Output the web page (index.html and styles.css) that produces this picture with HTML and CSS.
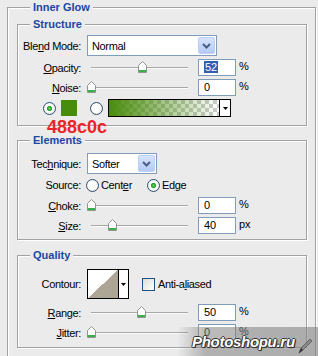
FILE: index.html
```html
<!DOCTYPE html>
<html>
<head>
<meta charset="utf-8">
<link rel="stylesheet" href="styles.css">
</head>
<body>
<div class="group outer">
  <div class="legend">Inner Glow</div>

  <div class="group sub structure">
    <div class="legend">Structure</div>
    <div class="row r-select">
      <span class="lbl">Ble<u>n</u>d Mode:</span>
      <div class="select blend"><span class="stext">Normal</span><span class="btn"><svg width="15" height="17" viewBox="0 0 15 17"><path d="M4 7 L7.5 10.5 L11 7" fill="none" stroke="#4a5f86" stroke-width="2"/></svg></span></div>
    </div>
    <div class="row">
      <span class="lbl"><u>O</u>pacity:</span>
      <div class="slider"><span class="track"></span><svg class="thumb" style="left:51px" width="9" height="12" viewBox="0 0 9 12"><path d="M0.5 11.5V4.5L4.5 0.5L8.5 4.5V11.5Z" fill="#fff" stroke="#8d978d"/><rect x="1" y="9" width="7" height="2" fill="#3bb04a"/></svg></div>
      <div class="num"><span class="sel">52</span></div>
      <span class="unit">%</span>
    </div>
    <div class="row">
      <span class="lbl"><u>N</u>oise:</span>
      <div class="slider"><span class="track"></span><svg class="thumb" style="left:0px" width="9" height="12" viewBox="0 0 9 12"><path d="M0.5 11.5V4.5L4.5 0.5L8.5 4.5V11.5Z" fill="#fff" stroke="#8d978d"/><rect x="1" y="9" width="7" height="2" fill="#3bb04a"/></svg></div>
      <div class="num">0</div>
      <span class="unit">%</span>
    </div>
    <div class="row r-color">
      <span class="radio on first"></span>
      <span class="swatch"></span>
      <span class="radio second"></span>
      <div class="grad"><span class="gbar"></span><span class="garrow"><svg width="5" height="3" viewBox="0 0 5 3"><path d="M0 0H5L2.5 3Z" fill="#000"/></svg></span></div>
    </div>
    <div class="hex">488c0c</div>
  </div>

  <div class="group sub elements">
    <div class="legend">Elements</div>
    <div class="row r-select tech">
      <span class="lbl">Tec<u>h</u>nique:</span>
      <div class="select softer"><span class="stext">Softer</span><span class="btn"><svg width="15" height="17" viewBox="0 0 15 17"><path d="M4 7 L7.5 10.5 L11 7" fill="none" stroke="#4a5f86" stroke-width="2"/></svg></span></div>
    </div>
    <div class="row src">
      <span class="lbl srclbl">Source:</span>
      <label class="opt"><span class="radio"></span><span class="otext">Cent<u>e</u>r</span></label>
      <label class="opt"><span class="radio on"></span><span class="otext">Ed<u>g</u>e</span></label>
    </div>
    <div class="row">
      <span class="lbl"><u>C</u>hoke:</span>
      <div class="slider"><span class="track"></span><svg class="thumb" style="left:0px" width="9" height="12" viewBox="0 0 9 12"><path d="M0.5 11.5V4.5L4.5 0.5L8.5 4.5V11.5Z" fill="#fff" stroke="#8d978d"/><rect x="1" y="9" width="7" height="2" fill="#3bb04a"/></svg></div>
      <div class="num">0</div>
      <span class="unit">%</span>
    </div>
    <div class="row">
      <span class="lbl"><u>S</u>ize:</span>
      <div class="slider"><span class="track"></span><svg class="thumb" style="left:21px" width="9" height="12" viewBox="0 0 9 12"><path d="M0.5 11.5V4.5L4.5 0.5L8.5 4.5V11.5Z" fill="#fff" stroke="#8d978d"/><rect x="1" y="9" width="7" height="2" fill="#3bb04a"/></svg></div>
      <div class="num">40</div>
      <span class="unit">px</span>
    </div>
  </div>

  <div class="group sub quality">
    <div class="legend">Quality</div>
    <div class="row r-contour">
      <span class="lbl">Contour:</span>
      <div class="contour"><span class="cprev"></span><span class="carrow"><svg width="5" height="3" viewBox="0 0 5 3"><path d="M0 0H5L2.5 3Z" fill="#000"/></svg></span></div>
      <span class="check"></span>
      <span class="ctext">Anti-a<u>l</u>iased</span>
    </div>
    <div class="row range">
      <span class="lbl"><u>R</u>ange:</span>
      <div class="slider"><span class="track"></span><svg class="thumb" style="left:50px" width="9" height="12" viewBox="0 0 9 12"><path d="M0.5 11.5V4.5L4.5 0.5L8.5 4.5V11.5Z" fill="#fff" stroke="#8d978d"/><rect x="1" y="9" width="7" height="2" fill="#3bb04a"/></svg></div>
      <div class="num">50</div>
      <span class="unit">%</span>
    </div>
    <div class="row">
      <span class="lbl"><u>J</u>itter:</span>
      <div class="slider"><span class="track"></span><svg class="thumb" style="left:0px" width="9" height="12" viewBox="0 0 9 12"><path d="M0.5 11.5V4.5L4.5 0.5L8.5 4.5V11.5Z" fill="#fff" stroke="#8d978d"/><rect x="1" y="9" width="7" height="2" fill="#3bb04a"/></svg></div>
      <div class="num">0</div>
      <span class="unit">%</span>
    </div>
  </div>
</div>

<div class="wm"><span class="wmtext">Photoshopu.ru</span><svg class="pen" width="16" height="18" viewBox="0 0 16 18"><path d="M2 16 L4 11 L13 2 L15 4 L6 13 Z" fill="#8a8a8a" stroke="#555" stroke-width="0.8"/><path d="M2 16 L4 11 L6 13 Z" fill="#333"/></svg></div>
</body>
</html>
```

FILE: styles.css
```css
html, body {
  margin: 0;
  padding: 0;
  overflow: hidden;
  background: #ebebeb;
}
body {
  font-family: "Liberation Sans", Arial, sans-serif;
  font-size: 11px;
  letter-spacing: -0.35px;
  color: #000;
  width: 318px;
  height: 356px;
  position: relative;
}
u { text-decoration: underline; text-underline-offset: 1px; }

.group {
  border: 1px solid #a2a2a2;
  box-shadow: inset 1px 1px 0 #fff, 1px 1px 0 #fff;
  box-sizing: border-box;
}
.outer {
  margin: 7px 0 0 7px;
  width: 309px;
  padding: 0 8px 14px 9px;
}
.legend {
  display: block;
  width: fit-content;
  height: 14px;
  line-height: 14px;
  margin: -8px 0 0 12px;
  padding: 0 3px;
  background: #ebebeb;
  color: #1c46a4;
  font-weight: bold;
  font-size: 11px;
  letter-spacing: 0;
  position: relative;
}
.outer > .legend { margin-left: 13px; }

.sub { width: 290px; position: relative; }
.structure { margin-top: 10px; padding-bottom: 7px; }
.elements { margin-top: 14px; padding-bottom: 3px; }
.quality { margin-top: 15px; padding-bottom: 4px; }

.row {
  display: flex;
  align-items: center;
  height: 20px;
}
.lbl {
  flex: none;
  width: 63px;
  margin-right: 6px;
  text-align: right;
  white-space: nowrap;
}

/* selects */
.r-select { height: 21px; margin-top: 4px; }
.structure .row + .row { margin-top: 2px; }
.structure .row + .row + .row { margin-top: 0; }
.structure .r-color { margin-top: 3px; }
.select {
  flex: none;
  box-sizing: border-box;
  height: 21px;
  border: 1px solid #7f9db9;
  background: #fff;
  display: flex;
  align-items: center;
  padding: 0 1px 0 4px;
}
.blend { width: 130px; }
.softer { width: 70px; }
.stext { flex: 1; }
.btn {
  flex: none;
  width: 17px;
  height: 17px;
  box-sizing: border-box;
  border: 1px solid #bccff5;
  border-radius: 2px;
  background: linear-gradient(#d6e3fc, #b4caf4);
  display: flex;
  align-items: center;
  justify-content: center;
}

/* sliders */
.slider {
  flex: none;
  position: relative;
  width: 101px;
  height: 20px;
  display: flex;
  align-items: center;
}
.track {
  display: block;
  margin-left: 4px;
  width: 97px;
  height: 0;
  border-top: 1px solid #a7a7a7;
  border-bottom: 1px solid #fbfbfb;
}
.thumb { position: absolute; top: 3px; }

.num {
  flex: none;
  align-self: flex-start;
  box-sizing: border-box;
  width: 38px;
  height: 17px;
  margin: 1px 0 0 10px;
  padding-left: 5px;
  border: 1px solid #7f9db9;
  background: #fff;
  line-height: 15px;
  letter-spacing: 0;
}
.sel { background: #2f5fb3; color: #fff; padding: 0 1px; }
.unit { margin-left: 3px; margin-top: -4px; letter-spacing: 0; }

/* radios */
.radio {
  flex: none;
  width: 13px;
  height: 13px;
  box-sizing: border-box;
  border-radius: 50%;
  border: 1px solid #2d4d6e;
  background: radial-gradient(circle at 45% 45%, #fff 40%, #dcdcd4);
}
.radio.on {
  background: radial-gradient(circle, #5fd35f 0, #2aa12a 2.2px, transparent 3px),
              radial-gradient(circle at 45% 45%, #fff 40%, #dcdcd4);
}

/* color row */
.r-color { height: 20px; }
.first { margin-left: 25px; }
.swatch {
  flex: none;
  width: 16px;
  height: 16px;
  margin-left: 5px;
  background: #488c0c;
}
.second { margin-left: 13px; }
.grad {
  flex: none;
  display: flex;
  margin-left: 5px;
  height: 18px;
  box-sizing: border-box;
  border: 1px solid #000;
  width: 123px;
}
.gbar {
  flex: 1;
  background:
    linear-gradient(to right, #488c0c, rgba(72,140,12,0.55) 45%, rgba(72,140,12,0)),
    repeating-conic-gradient(#ffffff 0 25%, #cccccc 0 50%) 0 0 / 8px 8px;
}
.garrow {
  flex: none;
  width: 10px;
  border-left: 1px solid #000;
  background: #fff;
  display: flex;
  align-items: center;
  justify-content: center;
}
.hex {
  position: absolute;
  left: 29px;
  top: 96px;
  font-family: "Liberation Sans", Arial, sans-serif;
  font-weight: bold;
  font-size: 18px;
  line-height: 13px;
  letter-spacing: 0;
  color: #ec2427;
}

/* elements */
.tech { margin-top: 6px; }
.src { margin-top: 1px; }
.srclbl { margin-right: 5px; }
.opt {
  flex: none;
  display: flex;
  align-items: center;
  width: 61px;
}
.otext { margin-left: 2px; }
.elements .src + .row { margin-top: 1px; }

/* quality */
.r-contour { height: 30px; margin-top: 7px; }
.contour {
  flex: none;
  display: flex;
  width: 42px;
  height: 30px;
  box-sizing: border-box;
  border: 1px solid #000;
  background: #fff;
}
.cprev {
  flex: none;
  width: 30px;
  background: linear-gradient(to top left, #ada696 50%, #fff 50%);
}
.carrow {
  flex: 1;
  border-left: 1px solid #000;
  display: flex;
  align-items: center;
  justify-content: center;
}
.check {
  flex: none;
  width: 13px;
  height: 13px;
  box-sizing: border-box;
  margin-left: 13px;
  border: 1px solid #1c5180;
  background: linear-gradient(135deg, #dcdcd5, #fff);
}
.ctext { margin-left: 3px; }
.range { margin-top: 4px; }

/* watermark overlay */
.wm {
  position: absolute;
  left: 177px;
  top: 327px;
  width: 141px;
  height: 29px;
  box-sizing: border-box;
  padding-left: 15px;
  display: flex;
  align-items: center;
  background: linear-gradient(to right, rgba(140,140,140,0), rgba(130,130,130,0.55) 20%, rgba(130,130,130,0.6));
}
.wmtext {
  font-family: "Liberation Sans", Arial, sans-serif;
  font-weight: bold;
  font-style: italic;
  font-size: 15px;
  color: #fff;
  letter-spacing: -0.3px;
  text-shadow: 1px 0 0 #333, -1px 0 0 #333, 0 1px 0 #333, 0 -1px 0 #333, 1px 1px 1px #222;
}
.pen { margin-left: 2px; margin-top: 8px; }
```
